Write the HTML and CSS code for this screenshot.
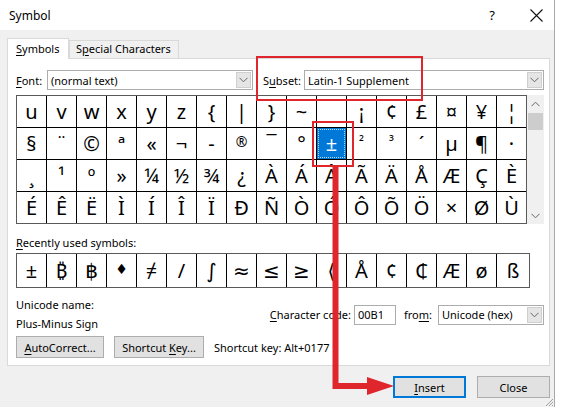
FILE: index.html
```html
<!DOCTYPE html>
<html>
<head>
	<title>Symbol</title>
	<link rel="stylesheet" href="styles.css">
</head>
<body>
	<div class="dialog">
		<div class="titlebar">
			<span class="title">Symbol</span>
			<span class="help">?</span>
			<span class="closex"><svg width="13" height="13" viewBox="0 0 13 13"><path d="M0.5 0.5 L12.5 12.5 M12.5 0.5 L0.5 12.5" stroke="#111" stroke-width="1.1" fill="none"/></svg></span>
		</div>
		<div class="content">
			<div class="tabs">
				<div class="tab active"><u>S</u>ymbols</div>
				<div class="tab">S<u>p</u>ecial Characters</div>
			</div>
			<div class="panel">
				<div class="selrow">
					<label class="lbl-font"><u>F</u>ont:</label>
					<div class="select sel-font"><span>(normal text)</span><i class="drop"><svg width="9" height="6" viewBox="0 0 9 6"><path d="M0.5 0.8 L4.5 4.8 L8.5 0.8" stroke="#666" fill="none"/></svg></i></div>
					<label class="lbl-subset">S<u>u</u>bset:</label>
					<div class="select sel-subset"><span>Latin-1 Supplement</span><i class="drop"><svg width="9" height="6" viewBox="0 0 9 6"><path d="M0.5 0.8 L4.5 4.8 L8.5 0.8" stroke="#666" fill="none"/></svg></i></div>
				</div>

				<div class="gridwrap">
					<div class="grid">
						<div class="cell">u</div><div class="cell">v</div><div class="cell">w</div><div class="cell">x</div><div class="cell">y</div><div class="cell">z</div><div class="cell">{</div><div class="cell">|</div><div class="cell">}</div><div class="cell">~</div><div class="cell"></div><div class="cell">¡</div><div class="cell">¢</div><div class="cell">£</div><div class="cell">¤</div><div class="cell">¥</div><div class="cell">¦</div>
						<div class="cell">§</div><div class="cell">¨</div><div class="cell">©</div><div class="cell">ª</div><div class="cell">«</div><div class="cell">¬</div><div class="cell">-</div><div class="cell small">®</div><div class="cell">¯</div><div class="cell">°</div><div class="cell sel">±</div><div class="cell small">²</div><div class="cell small">³</div><div class="cell">´</div><div class="cell">µ</div><div class="cell">¶</div><div class="cell">·</div>
						<div class="cell">¸</div><div class="cell">¹</div><div class="cell">º</div><div class="cell">»</div><div class="cell">¼</div><div class="cell">½</div><div class="cell">¾</div><div class="cell">¿</div><div class="cell">À</div><div class="cell">Á</div><div class="cell">Â</div><div class="cell">Ã</div><div class="cell">Ä</div><div class="cell">Å</div><div class="cell">Æ</div><div class="cell">Ç</div><div class="cell">È</div>
						<div class="cell">É</div><div class="cell">Ê</div><div class="cell">Ë</div><div class="cell">Ì</div><div class="cell">Í</div><div class="cell">Î</div><div class="cell">Ï</div><div class="cell">Ð</div><div class="cell">Ñ</div><div class="cell">Ò</div><div class="cell">Ó</div><div class="cell">Ô</div><div class="cell">Õ</div><div class="cell">Ö</div><div class="cell">×</div><div class="cell">Ø</div><div class="cell">Ù</div>
					</div>
					<div class="scroll">
						<div class="sbtn"><svg width="9" height="6" viewBox="0 0 9 6"><path d="M0.5 5.2 L4.5 1.2 L8.5 5.2" stroke="#666" fill="none"/></svg></div>
						<div class="thumb"></div>
						<div class="track"></div>
						<div class="sbtn"><svg width="9" height="6" viewBox="0 0 9 6"><path d="M0.5 0.8 L4.5 4.8 L8.5 0.8" stroke="#666" fill="none"/></svg></div>
					</div>
				</div>

				<div class="caption"><u>R</u>ecently used symbols:</div>
				<div class="recent">
					<div class="cell">±</div><div class="cell">₿</div><div class="cell">฿</div><div class="cell small">♦</div><div class="cell">≠</div><div class="cell">/</div><div class="cell">∫</div><div class="cell">≈</div><div class="cell">≤</div><div class="cell">≥</div><div class="cell">⟨</div><div class="cell">Å</div><div class="cell">¢</div><div class="cell">₵</div><div class="cell">Æ</div><div class="cell">ø</div><div class="cell">ß</div>
				</div>

				<div class="info">
					<div class="names">
						<div>Unicode name:</div>
						<div>Plus-Minus Sign</div>
					</div>
					<div class="coderow">
						<label><u>C</u>haracter code:</label>
						<div class="codebox">00B1</div>
						<label class="from">fro<u>m</u>:</label>
						<div class="select sel-from"><span>Unicode (hex)</span><i class="drop"><svg width="9" height="6" viewBox="0 0 9 6"><path d="M0.5 0.8 L4.5 4.8 L8.5 0.8" stroke="#666" fill="none"/></svg></i></div>
					</div>
				</div>

				<div class="btnrow">
					<button class="btn btn-auto"><u>A</u>utoCorrect...</button>
					<button class="btn btn-key">Shortcut <u>K</u>ey...</button>
					<span class="keytext">Shortcut key: Alt+0177</span>
				</div>
			</div>

			<div class="footer">
				<button class="btn btn-insert"><u>I</u>nsert</button>
				<button class="btn btn-close">Close</button>
			</div>
		</div>

		<svg class="grip" width="10" height="10" viewBox="0 0 10 10"><path d="M9 2 L2 9 M9 5 L5 9 M9 8 L8 9" stroke="#a0a0a0" fill="none"/></svg>

		<!-- red annotation drawn over the dialog -->
		<svg class="marks" width="561" height="407" viewBox="0 0 561 407">
			<rect x="257" y="57" width="165" height="43" fill="none" stroke="#e0262d" stroke-width="2"/>
			<rect x="313" y="122" width="40" height="44" fill="none" stroke="#e0262d" stroke-width="2"/>
			<path d="M335.5 166 L335.5 386 L371 386" fill="none" stroke="#e0262d" stroke-width="6"/>
			<polygon points="367,377 394,386 367,395" fill="#e0262d"/>
		</svg>
	</div>
</body>
</html>
```

FILE: styles.css
```css
* {
	box-sizing: border-box;
}
body {
	margin: 0;
	background: #fff;
	font-family: "Noto Sans", "DejaVu Sans", sans-serif;
	font-size: 11px;
	color: #000;
}
u {
	text-decoration-thickness: 1px;
	text-underline-offset: 2px;
}

.dialog {
	position: relative;
	width: 555px;
	height: 407px;
	background: #f0f0f0;
	border-right: 1px solid #a8a8a8;
}

.titlebar {
	height: 30px;
	background: #fff;
	display: flex;
	align-items: center;
	padding-left: 9px;
	font-size: 12px;
}
.title {
	flex: 1;
}
.help {
	width: 14px;
	text-align: center;
	font-size: 13px;
	margin-right: 31px;
}
.closex {
	display: flex;
	margin-right: 11px;
}

.content {
	padding: 8px 4px 0 7px;
}

.tabs {
	display: flex;
	align-items: flex-end;
	height: 20px;
}
.tab {
	height: 18px;
	padding: 0 7px 0 6px;
	border: 1px solid #d9d9d9;
	border-bottom: none;
	line-height: 16px;
	background: #f0f0f0;
}
.tab.active {
	height: 21px;
	width: 62px;
	padding-left: 8px;
	background: #fff;
	line-height: 19px;
	margin-bottom: -1px;
	position: relative;
}

.panel {
	background: #fff;
	border: 1px solid #d9d9d9;
	height: 308px;
	padding: 11px 5px 0 8px;
}

.selrow {
	display: flex;
	align-items: center;
	height: 20px;
}
.lbl-font {
	width: 31px;
}
.lbl-subset {
	width: 41px;
	margin-left: 10px;
}
.select {
	height: 20px;
	border: 1px solid #acacac;
	display: flex;
	align-items: center;
	padding-left: 3px;
	background: #fff;
}
.select span {
	flex: 1;
	white-space: nowrap;
}
.drop {
	width: 15px;
	height: 16px;
	margin-right: 1px;
	background: #e5e5e5;
	border: 1px solid #cfcfcf;
	display: flex;
	align-items: center;
	justify-content: center;
}
.sel-font {
	width: 206px;
}
.sel-subset {
	flex: 1;
}

.gridwrap {
	display: flex;
	margin-top: 5px;
}
.grid, .recent {
	display: grid;
	gap: 1px;
	background: #000;
	border: 1px solid #5a5a5a;
}
.grid {
	grid-template-columns: repeat(17, 29px);
	grid-auto-rows: 31px;
}
.recent {
	grid-template-columns: repeat(16, 29px) 32px;
	grid-auto-rows: 33px;
	width: 514px;
	margin-top: 2px;
}
.cell {
	background: #fff;
	display: flex;
	align-items: center;
	justify-content: center;
	font-size: 20px;
	font-family: "Noto Sans", "DejaVu Sans", sans-serif;
}
.cell.small {
	font-size: 14px;
	padding-bottom: 4px;
}
.cell.sel {
	background: #0078d7;
	color: #fff;
	outline: 1px dotted #b9d8f3;
	outline-offset: -2px;
}

.scroll {
	width: 17px;
	background: #f0f0f0;
	display: flex;
	flex-direction: column;
}
.sbtn {
	height: 17px;
	display: flex;
	align-items: center;
	justify-content: center;
}
.thumb {
	height: 17px;
	margin: 1px 1px 0;
	background: #cdcdcd;
}
.track {
	flex: 1;
}

.caption {
	margin-top: 11px;
	line-height: 16px;
}

.info {
	display: flex;
	align-items: center;
	margin-top: 7px;
	line-height: 19px;
}
.coderow {
	display: flex;
	align-items: center;
	margin-left: auto;
	margin-top: 1px;
}
.codebox {
	width: 42px;
	height: 20px;
	margin-left: 3px;
	border: 1px solid #acacac;
	padding-left: 3px;
	line-height: 18px;
}
.from {
	margin-left: 8px;
}
.sel-from {
	width: 106px;
	margin-left: 6px;
}

.btnrow {
	display: flex;
	align-items: center;
	margin-top: 3px;
}
.btn {
	height: 22px;
	font-family: "Noto Sans", "DejaVu Sans", sans-serif;
	font-size: 11px;
	color: #000;
	background: #e1e1e1;
	border: 1px solid #adadad;
	padding: 0;
}
.btn-auto {
	width: 88px;
}
.btn-key {
	width: 90px;
	margin-left: 10px;
}
.keytext {
	margin-left: 10px;
}

.footer {
	display: flex;
	justify-content: flex-end;
	margin-top: 10px;
}
.btn-insert {
	width: 73px;
	margin-right: 11px;
	border: 1px solid #0078d7;
	box-shadow: inset 0 0 0 1px #0078d7;
}
.btn-close {
	width: 73px;
}

.grip {
	position: absolute;
	right: 0;
	bottom: 0;
}
.marks {
	position: absolute;
	left: 0;
	top: 0;
	pointer-events: none;
}
```
